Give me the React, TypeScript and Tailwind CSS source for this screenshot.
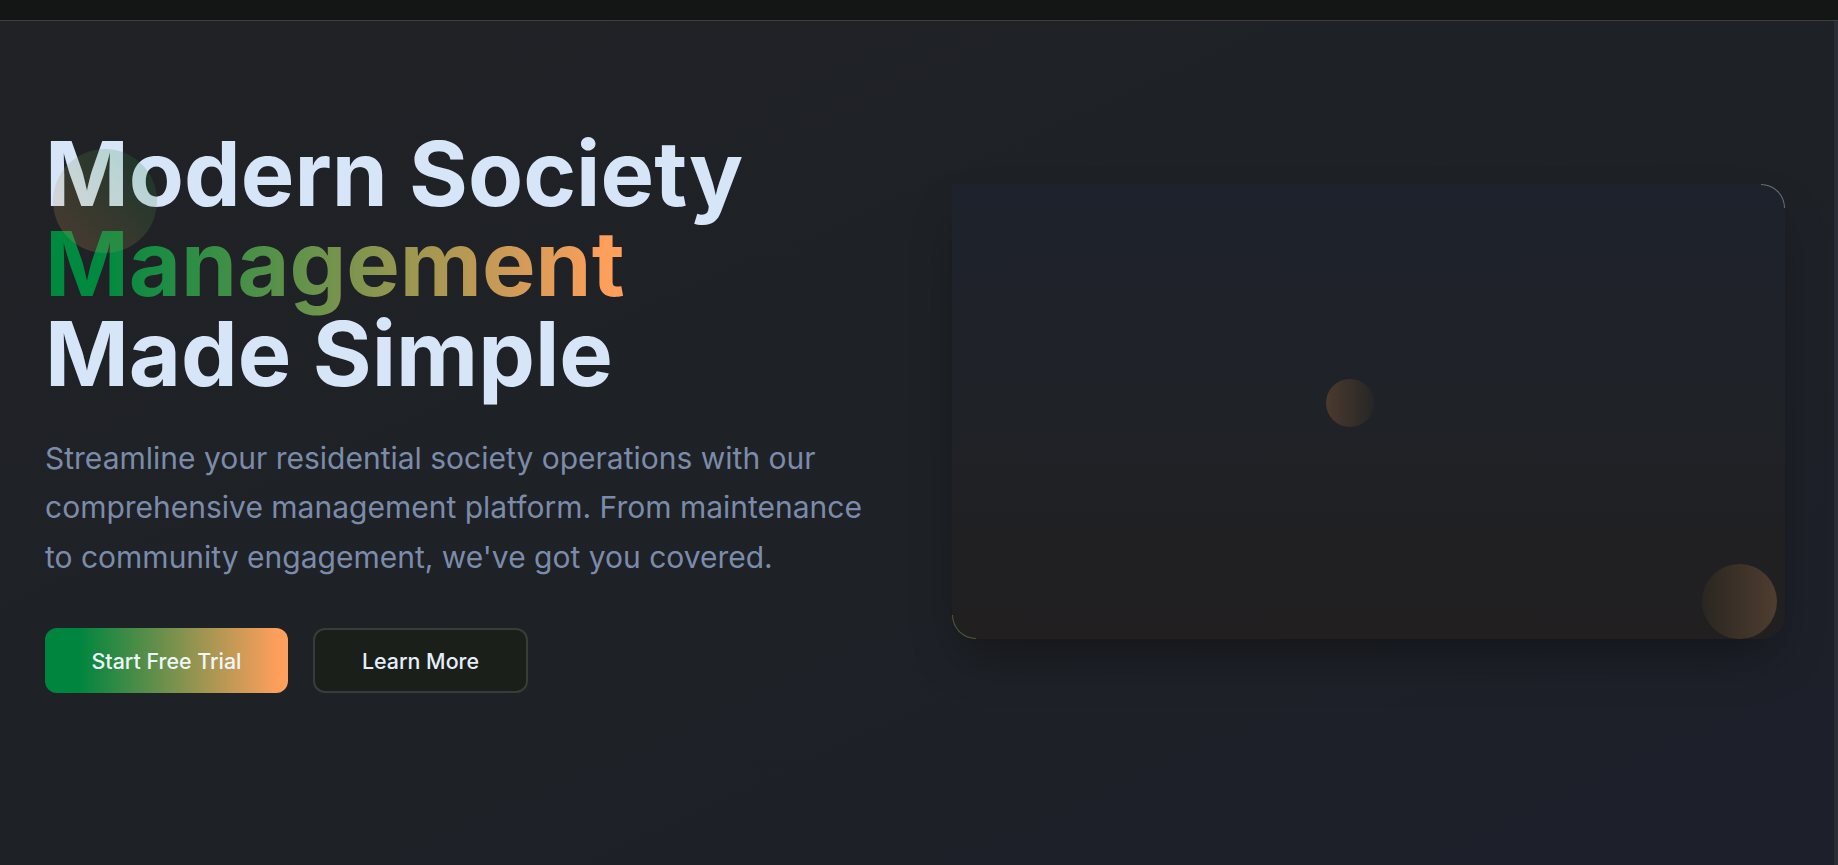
import React from "react";

export default function App() {
  return (
    <div
      className="flex h-[865px] w-full flex-col overflow-hidden bg-[#1f2125]"
      style={{ fontFamily: "Inter, 'Noto Sans', sans-serif" }}
    >
      <div className="h-[21px] shrink-0 border-b border-[#3d3f3d] bg-[#141515]" />
      <div className="flex min-h-0 flex-1">
        <main className="relative flex flex-1 items-center bg-linear-to-br/srgb from-[#202226] via-[#1e2125] to-[#1d202b] pb-[64px] pl-[45px] pr-[49px]">
          <div className="grid w-full grid-cols-2 items-center gap-[74px]">
            <div className="relative">
              <h1 className="text-[90px] font-bold leading-[90px] text-[#d7e5f8]">
                Modern Society
                <br />
                <span className="bg-linear-to-r/srgb from-[#008a40] from-10% to-[#ff9f5c] to-97% bg-clip-text text-transparent">
                  Management
                </span>
                <br />
                Made Simple
              </h1>
              <p className="mt-[35px] text-[30px] leading-[49.5px] text-[#7b8cab]">
                Streamline your residential society operations with our comprehensive management platform. From maintenance to community engagement, we've got you covered.
              </p>
              <div className="mt-[46px] flex gap-[25px]">
                <button className="flex h-[65px] w-[243px] items-center justify-center rounded-xl bg-linear-to-r/srgb from-[#00853f] from-14% to-[#ff9f5c] to-96% text-[21.4px] font-medium text-[#eef7f7]">
                  Start Free Trial
                </button>
                <button className="flex h-[65px] w-[215px] items-center justify-center rounded-xl border-2 border-[#3a3c3a] bg-[#1b1f1a] text-[21.4px] font-medium text-[#e4effa]">
                  Learn More
                </button>
              </div>
              <div className="pointer-events-none absolute left-[8px] top-[20px] h-[104px] w-[104px] rounded-full bg-linear-to-tr/srgb from-[#ff9f5c] to-[#00873f] opacity-20" />
            </div>
            <div className="relative h-[455px] rounded-[24px] rounded-tl-none bg-linear-to-b/srgb from-[#1e222c] via-[#1f2227] to-[#211f20] shadow-[0_25px_50px_-12px_rgba(0,0,0,0.35)]">
              <div className="absolute right-0 top-0 h-[24px] w-[24px] rounded-tr-[24px] border-r border-t border-[#6b6e72]" />
              <div className="absolute bottom-0 left-0 h-[24px] w-[24px] rounded-bl-[24px] border-b border-l border-[#4d5a3a]" />
              <div className="absolute left-[374px] top-[195px] h-[48px] w-[48px] rounded-full bg-linear-to-r/srgb from-[#4b3a2f] to-[#262625]" />
              <div className="absolute bottom-0 right-[8px] h-[75px] w-[75px] rounded-full bg-linear-to-r/srgb from-[#2a2621] to-[#4f3d30]" />
            </div>
          </div>
        </main>
        <div className="w-[4px] shrink-0 bg-[#2a2c36]" />
      </div>
    </div>
  );
}
